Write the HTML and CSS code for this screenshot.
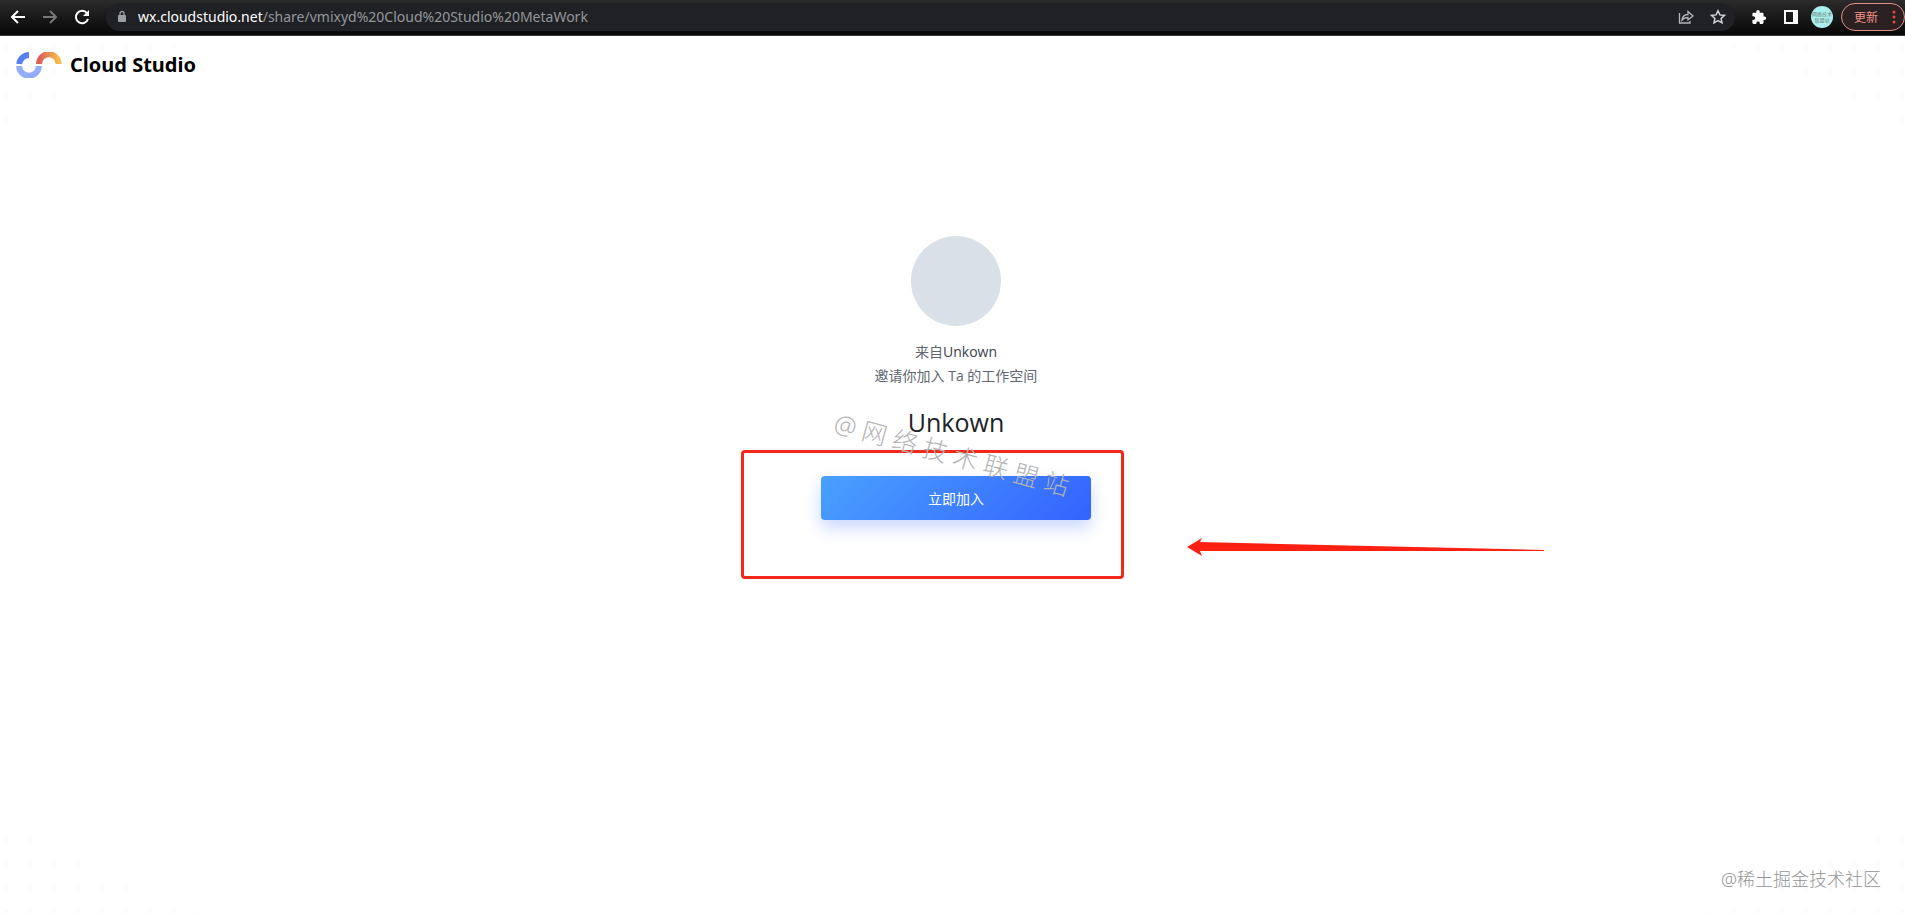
FILE: index.html
```html
<!DOCTYPE html>
<html lang="zh-CN">
<head>
<meta charset="utf-8">
<title>Cloud Studio</title>
<link rel="stylesheet" href="styles.css">
</head>
<body>
<div class="toolbar">
  <button class="tool" aria-label="后退"><svg viewBox="0 0 16 16" width="16" height="16" fill="none" stroke="#fff" stroke-width="2"><path d="M15 8H2M8 2L2 8l6 6"/></svg></button>
  <button class="tool" aria-label="前进"><svg viewBox="0 0 16 16" width="16" height="16" fill="none" stroke="#77787a" stroke-width="2"><path d="M1 8h13M8 2l6 6-6 6"/></svg></button>
  <button class="tool" aria-label="刷新"><svg viewBox="0 0 16 16" width="16" height="16" fill="none" stroke="#fff" stroke-width="2"><path d="M13 4.200A6.200 6.200 0 1 0 14 10"/><path d="M15 1v6H9z" fill="#fff" stroke="none"/></svg></button>
  <div class="address">
    <svg class="lock" viewBox="0 0 10 14" width="10" height="14"><rect x="1" y="5" width="8" height="7" rx="1" fill="#9aa0a6"/><path d="M3 5V3.500a2 2 0 0 1 4 0V5" fill="none" stroke="#9aa0a6" stroke-width="1.300"/></svg>
    <span class="url"><span class="host">wx.cloudstudio.net</span>/share/vmixyd%20Cloud%20Studio%20MetaWork</span>
    <div class="actions">
      <button class="tool" aria-label="分享"><svg viewBox="0 0 16 16" width="16" height="16" fill="none" stroke="#b5b7ba" stroke-width="1.300"><path d="M1.500 4v10H12v-2"/><path d="M4 11c.5-4 2.500-5.500 6-5.500V2.500l5 4.500-5 4V8.500C7.500 8.500 5.500 9 4 11z"/></svg></button>
      <button class="tool" aria-label="收藏"><svg viewBox="0 0 16 16" width="16" height="16" fill="none" stroke="#d0d2d4" stroke-width="1.500"><path d="M8 1.800l1.900 4.100 4.500.5-3.300 3 .9 4.400L8 11.600l-4 2.200.9-4.400-3.300-3 4.500-.5z"/></svg></button>
    </div>
  </div>
  <button class="tool" aria-label="扩展程序"><svg viewBox="0 0 16 16" width="16" height="16" fill="#fff"><path d="M13.500 7.500h-1V5c0-.8-.6-1.300-1.300-1.300H8.700V2.600a1.700 1.700 0 0 0-3.400 0v1.100H2.700c-.7 0-1.300.5-1.300 1.300v2.300h1a1.800 1.800 0 0 1 0 3.600h-1v2.700c0 .7.600 1.300 1.300 1.300h2.600v-1a1.800 1.800 0 0 1 3.500 0v1h2.400c.7 0 1.300-.6 1.300-1.300v-2.700h1a1.700 1.700 0 0 0 0-3.400z"/></svg></button>
  <button class="tool" aria-label="侧边栏"><svg viewBox="0 0 16 16" width="16" height="16"><path fill="#fff" fill-rule="evenodd" d="M1 1h14v14H1zM3 3v10h7V3z"/></svg></button>
  <button class="profile" aria-label="用户"><span>网络技术</span><span>联盟站</span></button>
  <button class="update">更新<svg viewBox="0 0 4 14" width="4" height="14" fill="#e8453c"><circle cx="2" cy="2" r="1.500"/><circle cx="2" cy="7" r="1.500"/><circle cx="2" cy="12" r="1.500"/></svg></button>
</div>
<div class="page">
  <header class="brand">
    <svg viewBox="0 0 46 26" width="46" height="26">
      <defs>
        <linearGradient id="warm"><stop offset="0" stop-color="#dd5d5a"/><stop offset="1" stop-color="#f5bd4c"/></linearGradient>
      </defs>
      <path d="M3.200 12A10 10 0 0 1 13 3" fill="none" stroke="#5680ee" stroke-width="6"/>
      <path d="M3.200 14a9.800 9.800 0 0 0 19.600 0" fill="none" stroke="#93adfa" stroke-width="6"/>
      <path d="M23 12a9.800 9.800 0 0 1 19.600 0" fill="none" stroke="url(#warm)" stroke-width="6"/>
    </svg>
    <span class="name">Cloud Studio</span>
  </header>
  <main class="invite">
    <div class="avatar"></div>
    <p class="line">来自<span class="who">Unkown</span></p>
    <p class="line">邀请你加入 Ta 的工作空间</p>
    <h1 class="title">Unkown</h1>
    <div class="action">
      <button class="join">立即加入</button>
      <div class="frame"></div>
      <svg class="arrow" viewBox="0 0 358 18" width="358" height="18"><path fill="#ff2014" d="M0 9L15 0l-2 4L357 12v1L13 13l2 5z"/></svg>
      <div class="mark">@ 网 络 技 术 联 盟 站</div>
    </div>
  </main>
  <footer class="credit">@稀土掘金技术社区</footer>
</div>
</body>
</html>
```
FILE: styles.css
```css
* { box-sizing: border-box; }
body {
  margin: 0;
  min-height: 100vh;
  display: flex;
  flex-direction: column;
  font-family: "Open Sans", "Noto Sans CJK SC", sans-serif;
  background: #fff;
  overflow-x: hidden;
}
button {
  margin: 0;
  padding: 0;
  border: 0;
  background: none;
  font-family: inherit;
  cursor: pointer;
}
.toolbar {
  height: 36px;
  display: flex;
  align-items: center;
  gap: 16px;
  padding: 0 0 2px 10px;
  background: linear-gradient(#2b2b2b, #151515 60%, #080808);
  border-bottom: 1px solid #3a3a3a;
}
.tool { width: 16px; height: 16px; flex: none; }
.tool svg { display: block; }
.address {
  flex: 1;
  height: 28px;
  display: flex;
  align-items: center;
  gap: 11px;
  padding: 0 9px 0 11px;
  border-radius: 14px;
  background: #202124;
}
.actions { display: flex; gap: 16px; }
.lock { flex: none; }
.url {
  flex: 1;
  color: #94979b;
  font-family: "Noto Sans", sans-serif;
  font-size: 14px;
  white-space: nowrap;
}
.host { color: #fff; }
.profile {
  width: 22px;
  height: 22px;
  display: flex;
  flex-direction: column;
  align-items: center;
  justify-content: center;
  margin: 0 -8px 0 -4px;
  border-radius: 50%;
  background: #a9f0ee;
  color: #70837c;
  font-size: 5px;
  line-height: 6px;
}
.update {
  display: flex;
  align-items: center;
  gap: 14px;
  height: 28px;
  padding: 0 8px 0 12px;
  border: 1px solid #e28f86;
  border-radius: 14px;
  background: #2c2122;
  color: #ee9085;
  font-size: 12px;
}
.page {
  flex: 1;
  display: flex;
  flex-direction: column;
  background:
    radial-gradient(ellipse at center, #fff 60%, transparent 120%),
    radial-gradient(circle, #f8f8f8 1px, transparent 3px) -5px 0 / 24px 24px;
}
.brand {
  display: flex;
  align-items: center;
  gap: 8px;
  padding: 15px 16px;
}
.name {
  font-family: "Noto Sans", sans-serif;
  font-size: 20px;
  line-height: 28px;
  font-weight: 700;
  color: #000;
}
.invite {
  flex: 1;
  display: flex;
  flex-direction: column;
  align-items: center;
  padding: 142px 0 0 7px;
}
.avatar {
  width: 90px;
  height: 90px;
  margin-bottom: 14px;
  border-radius: 50%;
  background: #d9e0e7;
}
.line {
  margin: 0;
  color: #616672;
  font-size: 14px;
  line-height: 24px;
}
.who { color: #3c414b; }
.title {
  margin: 16px 0 36px;
  color: #202228;
  font-size: 25px;
  line-height: 36px;
  font-weight: 400;
}
.action { position: relative; width: 270px; }
.join {
  width: 100%;
  height: 44px;
  display: block;
  border-radius: 4px;
  background: linear-gradient(135deg, #49a1ff, #3462ff);
  box-shadow: 0 8px 16px rgba(52, 98, 255, 0.25);
  color: #fff;
  font-size: 14px;
}
.frame {
  position: absolute;
  left: -80px;
  top: -26px;
  width: 383px;
  height: 129px;
  border: 3px solid #f3281a;
  border-radius: 4px;
  pointer-events: none;
}
.arrow { position: absolute; left: 366px; top: 62px; }
.mark {
  position: absolute;
  left: -4px;
  top: -40px;
  width: 270px;
  color: #b3b3b3;
  font-family: "Noto Sans", "Noto Sans CJK SC", sans-serif;
  font-size: 25px;
  font-weight: 300;
  line-height: 36px;
  text-align: center;
  white-space: nowrap;
  transform: rotate(15.6deg);
  pointer-events: none;
}
.credit {
  padding: 0 24px 23px;
  color: #959595;
  font-family: "Noto Sans", "Noto Sans CJK SC", sans-serif;
  font-size: 18px;
  font-weight: 300;
  line-height: 26px;
  text-align: right;
}
```
